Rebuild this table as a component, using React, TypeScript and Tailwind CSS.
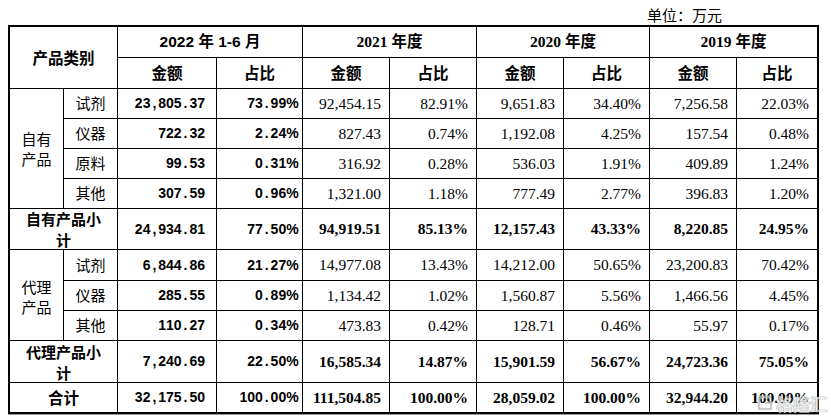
import React from "react";

const SERIF = "font-['Liberation_Serif','Noto_Sans_CJK_SC',serif]";
const CJK = "font-['Noto_Sans_CJK_SC',sans-serif]";
const SANS = "font-['Liberation_Sans','Noto_Sans_CJK_SC',sans-serif]";

function Mono({ s }: { s: string }) {
  return (
    <span className="inline-flex">
      {s.split("").map((c, i) => (
        <span key={i} className="inline-block w-[7.8px] text-center">
          {c}
        </span>
      ))}
    </span>
  );
}

type Row = {
  label: string;
  vals: string[];
  bold?: boolean;
};

const ownRows: Row[] = [
  { label: "试剂", vals: ["23,805.37", "73.99%", "92,454.15", "82.91%", "9,651.83", "34.40%", "7,256.58", "22.03%"] },
  { label: "仪器", vals: ["722.32", "2.24%", "827.43", "0.74%", "1,192.08", "4.25%", "157.54", "0.48%"] },
  { label: "原料", vals: ["99.53", "0.31%", "316.92", "0.28%", "536.03", "1.91%", "409.89", "1.24%"] },
  { label: "其他", vals: ["307.59", "0.96%", "1,321.00", "1.18%", "777.49", "2.77%", "396.83", "1.20%"] },
];
const ownSub = ["24,934.81", "77.50%", "94,919.51", "85.13%", "12,157.43", "43.33%", "8,220.85", "24.95%"];
const agRows: Row[] = [
  { label: "试剂", vals: ["6,844.86", "21.27%", "14,977.08", "13.43%", "14,212.00", "50.65%", "23,200.83", "70.42%"] },
  { label: "仪器", vals: ["285.55", "0.89%", "1,134.42", "1.02%", "1,560.87", "5.56%", "1,466.56", "4.45%"] },
  { label: "其他", vals: ["110.27", "0.34%", "473.83", "0.42%", "128.71", "0.46%", "55.97", "0.17%"] },
];
const agSub = ["7,240.69", "22.50%", "16,585.34", "14.87%", "15,901.59", "56.67%", "24,723.36", "75.05%"];
const total = ["32,175.50", "100.00%", "111,504.85", "100.00%", "28,059.02", "100.00%", "32,944.20", "100.00%"];

function Values({ vals, bold }: { vals: string[]; bold?: boolean }) {
  return (
    <>
      {vals.map((v, i) => {
        if (i === 0) {
          return (
            <div key={i} className={`bg-white flex items-center justify-end pr-[11px] text-[14px] font-bold ${SANS}`}>
              <Mono s={v} />
            </div>
          );
        }
        if (i === 1) {
          return (
            <div key={i} className={`bg-white flex items-center justify-end pr-[8px] text-[14px] font-bold ${SANS}`}>
              <Mono s={v} />
            </div>
          );
        }
        return (
          <div
            key={i}
            className={`bg-white flex items-center justify-end pr-[8px] text-[15.5px] ${SERIF} ${bold ? "font-bold" : "font-normal"}`}
          >
            {v}
          </div>
        );
      })}
    </>
  );
}

export default function App() {
  return (
    <div className="relative w-[831px] h-[420px] bg-white overflow-hidden text-black">
      <div className="h-[25px] flex justify-end pr-[109px]">
        <span className={`text-[15px] leading-[30px] ${CJK}`}>单位：万元</span>
      </div>
      <div className="ml-[8px] w-[811px] border-2 border-black bg-black grid gap-px grid-cols-[53px_53px_98px_85px_86px_86px_86px_85px_86px_80px] grid-rows-[30px_30px_29px_29px_29px_29px_40px_30px_29px_29px_41px_29px] shadow-[0_1px_0_#9a9a9a]">
        {/* header */}
        <div className={`bg-white col-span-2 row-span-2 flex items-center justify-center text-[15.5px] font-bold ${CJK}`}>
          产品类别
        </div>
        <div className={`bg-white col-span-2 flex items-center justify-center text-[15.5px] font-bold ${SANS}`}>
          2022 年 1-6 月
        </div>
        <div className={`bg-white col-span-2 flex items-center justify-center text-[15.5px] font-bold ${SERIF}`}>
          2021 年度
        </div>
        <div className={`bg-white col-span-2 flex items-center justify-center text-[15.5px] font-bold ${SERIF}`}>
          2020 年度
        </div>
        <div className={`bg-white col-span-2 flex items-center justify-center text-[15.5px] font-bold ${SERIF}`}>
          2019 年度
        </div>
        {[0, 1, 2, 3].map((k) => (
          <React.Fragment key={k}>
            <div className={`bg-white flex items-center justify-center text-[15.5px] font-bold ${CJK}`}>金额</div>
            <div className={`bg-white flex items-center justify-center text-[15.5px] font-bold ${CJK}`}>占比</div>
          </React.Fragment>
        ))}

        {/* own products */}
        <div className={`bg-white row-span-4 flex items-center justify-center text-[15px] leading-[20px] ${CJK}`}>
          <span>
            自有
            <br />
            产品
          </span>
        </div>
        {ownRows.map((r) => (
          <React.Fragment key={"o" + r.label}>
            <div className={`bg-white flex items-center justify-center text-[15px] ${CJK}`}>{r.label}</div>
            <Values vals={r.vals} />
          </React.Fragment>
        ))}
        <div className={`bg-white col-span-2 flex items-center justify-center text-center text-[15px] leading-[21px] font-bold ${CJK}`}>
          <span>
            自有产品小
            <br />
            计
          </span>
        </div>
        <Values vals={ownSub} bold />

        {/* agency products */}
        <div className={`bg-white row-span-3 flex items-center justify-center text-[15px] leading-[20px] ${CJK}`}>
          <span className="pt-[4px]">
            代理
            <br />
            产品
          </span>
        </div>
        {agRows.map((r) => (
          <React.Fragment key={"a" + r.label}>
            <div className={`bg-white flex items-center justify-center text-[15px] ${CJK}`}>{r.label}</div>
            <Values vals={r.vals} />
          </React.Fragment>
        ))}
        <div className={`bg-white col-span-2 flex items-center justify-center text-center text-[15px] leading-[21px] font-bold ${CJK}`}>
          <span>
            代理产品小
            <br />
            计
          </span>
        </div>
        <Values vals={agSub} bold />

        <div className={`bg-white col-span-2 flex items-center justify-center text-[15.5px] font-bold ${CJK}`}>合计</div>
        <Values vals={total} bold />
      </div>

      {/* watermark */}
      <div className="absolute left-[756px] top-[394px] flex items-center gap-[2px] opacity-80">
        <svg width="18" height="18" viewBox="0 0 18 18">
          <path d="M15 3 H3 V15 H15 V9 H9" fill="none" stroke="#e6e6e6" strokeWidth="3" />
          <path d="M15 3 H3 V15 H15 V9 H9" fill="none" stroke="#9a9a9a" strokeWidth="1" />
        </svg>
        <span
          className={`text-[17px] font-bold text-[#ececec] leading-none ${CJK} [text-shadow:0_0_1px_#777,0_0_1px_#777]`}
        >
          格隆汇
        </span>
      </div>
    </div>
  );
}
